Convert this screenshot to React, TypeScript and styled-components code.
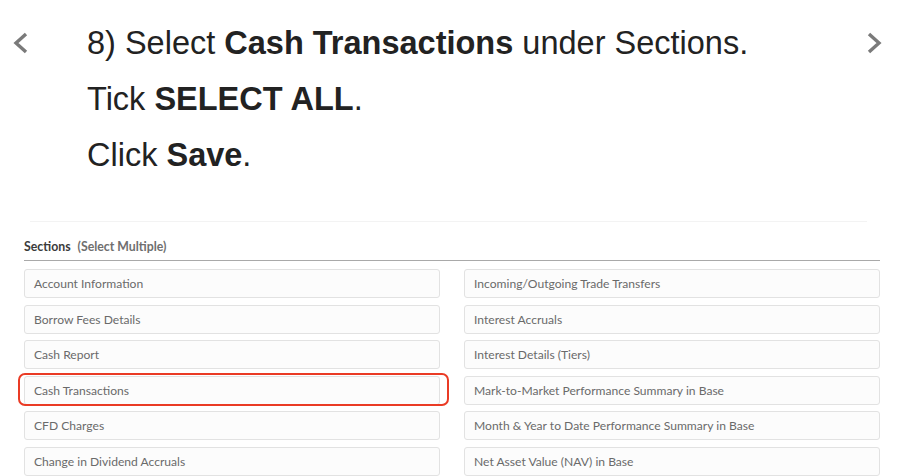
import React from "react";
import styled, { createGlobalStyle } from "styled-components";

const Global = createGlobalStyle`
  html, body { margin: 0; padding: 0; background: #ffffff; }
  body { width: 904px; height: 476px; overflow: hidden; }
`;

const Page = styled.div`
  width: 904px;
  height: 476px;
  display: flex;
  flex-direction: column;
  background: #fff;
`;

const Header = styled.div`
  display: flex;
  align-items: flex-start;
  padding-top: 15px;
`;

const NavButton = styled.div<{ $side: "left" | "right" }>`
  width: ${(p) => (p.$side === "left" ? "87px" : "auto")};
  padding-left: ${(p) => (p.$side === "left" ? "12px" : "0")};
  padding-right: ${(p) => (p.$side === "right" ? "21px" : "0")};
  box-sizing: border-box;
  height: 56px;
  display: flex;
  align-items: center;
`;

const Steps = styled.div`
  flex: 1;
  font-family: "Liberation Sans", Arial, sans-serif;
  font-size: 32.5px;
  line-height: 56px;
  color: #222;
  b { font-weight: 700; }
`;

const Line = styled.div``;

const Shot = styled.div`
  margin: 38px 0 0 24px;
  width: 856px;
  display: flex;
  flex-direction: column;
`;

const ShotEdge = styled.div`
  margin: 0 13px 0 6px;
  border-top: 1px solid #f3f3f3;
  height: 18px;
`;

const Label = styled.div`
  font-family: Lato, "Open Sans", sans-serif;
  font-size: 12.3px;
  line-height: 14px;
  font-weight: 700;
  color: #3b3b3b;
  padding-bottom: 6px;
  border-bottom: 1px solid #a9a9a9;
  span { color: #6f6f6f; font-weight: 700; margin-left: 7px; }
`;

const Grid = styled.div`
  margin-top: 8px;
  display: grid;
  grid-template-columns: 416px 416px;
  column-gap: 24px;
  grid-auto-rows: 29px;
  row-gap: 6.5px;
`;

const Item = styled.div<{ $highlight?: boolean }>`
  position: relative;
  box-sizing: border-box;
  border: 1px solid #e2e2e2;
  border-radius: 3px;
  background: #fcfcfc;
  display: flex;
  align-items: center;
  padding-left: 9px;
  font-family: Lato, "Open Sans", sans-serif;
  font-size: 12.1px;
  color: #6a6a6a;
  white-space: nowrap;
  &::after {
    content: "";
    display: ${(p) => (p.$highlight ? "block" : "none")};
    position: absolute;
    left: -7px;
    right: -10px;
    top: -4px;
    bottom: -2px;
    border: 2px solid #ea3b25;
    border-radius: 7px;
  }
`;

const Chevron = ({ dir }: { dir: "left" | "right" }) => (
  <svg width="17" height="24" viewBox="0 0 17 24">
    <polyline
      points={dir === "left" ? "14,3 4,12 14,21" : "3,3 13,12 3,21"}
      fill="none"
      stroke="#7a7a7a"
      strokeWidth="3.4"
    />
  </svg>
);

const left = [
  "Account Information",
  "Borrow Fees Details",
  "Cash Report",
  "Cash Transactions",
  "CFD Charges",
  "Change in Dividend Accruals",
];
const right = [
  "Incoming/Outgoing Trade Transfers",
  "Interest Accruals",
  "Interest Details (Tiers)",
  "Mark-to-Market Performance Summary in Base",
  "Month & Year to Date Performance Summary in Base",
  "Net Asset Value (NAV) in Base",
];

export default function App() {
  const items: { text: string; hi?: boolean }[] = [];
  left.forEach((l, i) => {
    items.push({ text: l, hi: l === "Cash Transactions" });
    items.push({ text: right[i] });
  });
  return (
    <Page>
      <Global />
      <Header>
        <NavButton $side="left">
          <Chevron dir="left" />
        </NavButton>
        <Steps>
          <Line>
            8) Select <b>Cash Transactions</b> under Sections.
          </Line>
          <Line>
            Tick <b>SELECT ALL</b>.
          </Line>
          <Line>
            Click <b>Save</b>.
          </Line>
        </Steps>
        <NavButton $side="right">
          <Chevron dir="right" />
        </NavButton>
      </Header>
      <Shot>
        <ShotEdge />
        <Label>
          Sections<span>(Select Multiple)</span>
        </Label>
        <Grid>
          {items.map((it, i) => (
            <Item key={i} $highlight={it.hi}>
              {it.text}
            </Item>
          ))}
        </Grid>
      </Shot>
    </Page>
  );
}
